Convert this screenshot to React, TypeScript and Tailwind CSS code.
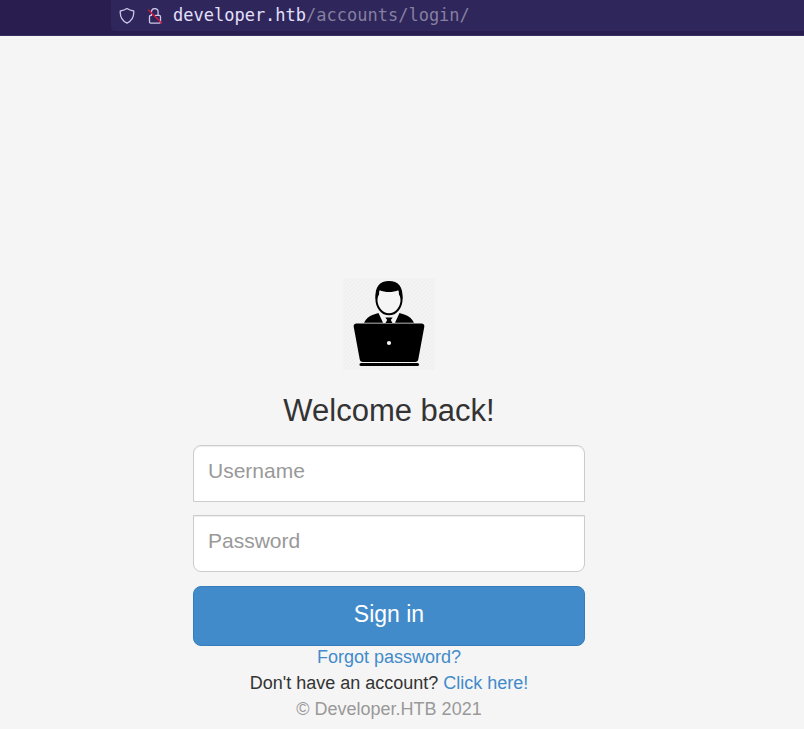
function ShieldIcon() {
  return (
    <svg className="h-4 w-4" viewBox="0 0 16 16" fill="none" stroke="#cdc8e8" strokeWidth="1.3" strokeLinejoin="round" aria-hidden="true">
      <path d="M8 .5C6.400 1.600 4.200 2.500 1.300 3c-.5 5.800 1.700 9.700 6.700 12.100 5-2.400 7.200-6.300 6.700-12.100C11.800 2.500 9.600 1.600 8 .5Z" />
    </svg>
  );
}

function InsecureLockIcon() {
  return (
    <svg className="h-4 w-4" viewBox="0 0 16 16" fill="none" strokeLinecap="round" aria-hidden="true">
      <path d="M4.500 3.500C4.800 1.700 6.100.6 7.800.6c1.900 0 3.300 1.400 3.300 3.300v3.500M4.500 7.400h-.7c-.8 0-1.300.5-1.300 1.300V14c0 .7.500 1.100 1.200 1.100h8.600c.7 0 1.200-.4 1.200-1.100V8.700c0-.8-.5-1.300-1.300-1.300H8.500M4.500 7.400V6" stroke="#cdc8e8" strokeWidth="1.300" />
      <path d="M1.500 2 14.600 15" stroke="#e0183f" strokeWidth="1.300" />
    </svg>
  );
}

function AddressBar() {
  return (
    <header className="flex h-9 border-b border-[#37305f] bg-[#291d4f] pb-1 pl-[111px]">
      <div className="flex flex-1 items-center rounded-bl bg-[#2f265c] pl-2">
        <ShieldIcon />
        <span className="w-3" />
        <InsecureLockIcon />
        <span className="pb-px pl-[10px] font-['DejaVu_Sans_Mono',monospace] text-[17px] leading-5 text-[#85809f]">
          <span className="text-[#e4e0fb]">developer.htb</span>/accounts/login/
        </span>
      </div>
    </header>
  );
}

function Logo() {
  return (
    <svg className="h-[92px] w-[92px]" viewBox="0 0 92 92" role="img" aria-label="Man behind a laptop">
      <defs>
        <pattern id="stripes" width="4" height="4" patternUnits="userSpaceOnUse">
          <rect width="4" height="4" fill="#f3f3f3" />
          <path d="M-1 1 1-1M0 4 4 0M3 5 5 3" stroke="#eeeeee" strokeWidth="1" />
        </pattern>
      </defs>
      <rect width="92" height="92" fill="url(#stripes)" />
      <path d="M21 44.800c2-4 5-6.500 9-8l5.500-1.700L40 44.800ZM71 44.800c-2-4-5-6.500-9-8l-5.500-1.700L52 44.800Z" />
      <path d="M42.300 39.500h7.400L47.800 42l1.700 3h-7l1.700-3Z" />
      <ellipse cx="46" cy="21" rx="12.600" ry="15.300" fill="#f5f5f5" stroke="#000" strokeWidth="2" />
      <path d="M32.600 20.500C31.600 8.500 37 3 46 3s14.400 5.500 13.400 17.500L58 22.500c-.2-3.300-1.500-4.500-2-6-.3-1.300-.1-3-.2-4.500-6.500 2.800-13.100 2.800-19.600 0-.1 1.500.1 3.200-.2 4.500-.5 1.500-1.800 2.700-2 6Z" />
      <path d="M13.500 45.500h65c2 0 3.200 1.300 2.800 3.300l-6 32.500c-.3 1.700-1.400 2.700-3.200 2.700H19.900c-1.800 0-2.900-1-3.200-2.700l-6-32.500c-.4-2 .8-3.300 2.800-3.300Z" />
      <circle cx="46" cy="65" r="2.100" fill="#f5f5f5" />
      <rect x="16.500" y="85" width="59.500" height="3" rx="1.500" />
    </svg>
  );
}

const fieldStyle =
  "block w-full border border-[#cccccc] bg-white px-[14px] pt-[11px] pb-4 text-[21px] leading-7 text-[#555555] shadow-[inset_0_1px_1px_rgba(0,0,0,0.075)] outline-none placeholder:text-[#999999] focus:border-[#66afe9]";

export default function App() {
  return (
    <div className="flex min-h-screen flex-col bg-[#f5f5f5] font-['Liberation_Sans',Arial,sans-serif] text-[18px] leading-[26px] text-[#333333]">
      <AddressBar />
      <main className="flex flex-1 flex-col items-center pt-[242px] pr-[26px]">
        <form className="flex w-full max-w-[392px] flex-col items-center" onSubmit={(event) => event.preventDefault()}>
          <Logo />
          <h1 className="pt-[23px] pb-[17px] text-[31px] leading-[35px]">Welcome back!</h1>
          <div className="flex w-full flex-col gap-[13px] pb-[14px]">
            <input type="text" aria-label="Username" placeholder="Username" className={`${fieldStyle} rounded-t-lg`} />
            <input type="password" aria-label="Password" placeholder="Password" className={`${fieldStyle} rounded-b-lg`} />
          </div>
          <button type="submit" className="w-full rounded-lg border border-[#357ebd] bg-[#428bca] pt-3 pb-4 text-[23px] leading-[30px] text-white">
            Sign in
          </button>
          <div className="-mt-0.5 text-center">
            <a href="#forgot" className="text-[#428bca]">Forgot password?</a>
            <p>
              Don't have an account? <a href="#signup" className="text-[#428bca]">Click here!</a>
            </p>
            <p className="text-[#999999]">© Developer.HTB 2021</p>
          </div>
        </form>
      </main>
    </div>
  );
}
